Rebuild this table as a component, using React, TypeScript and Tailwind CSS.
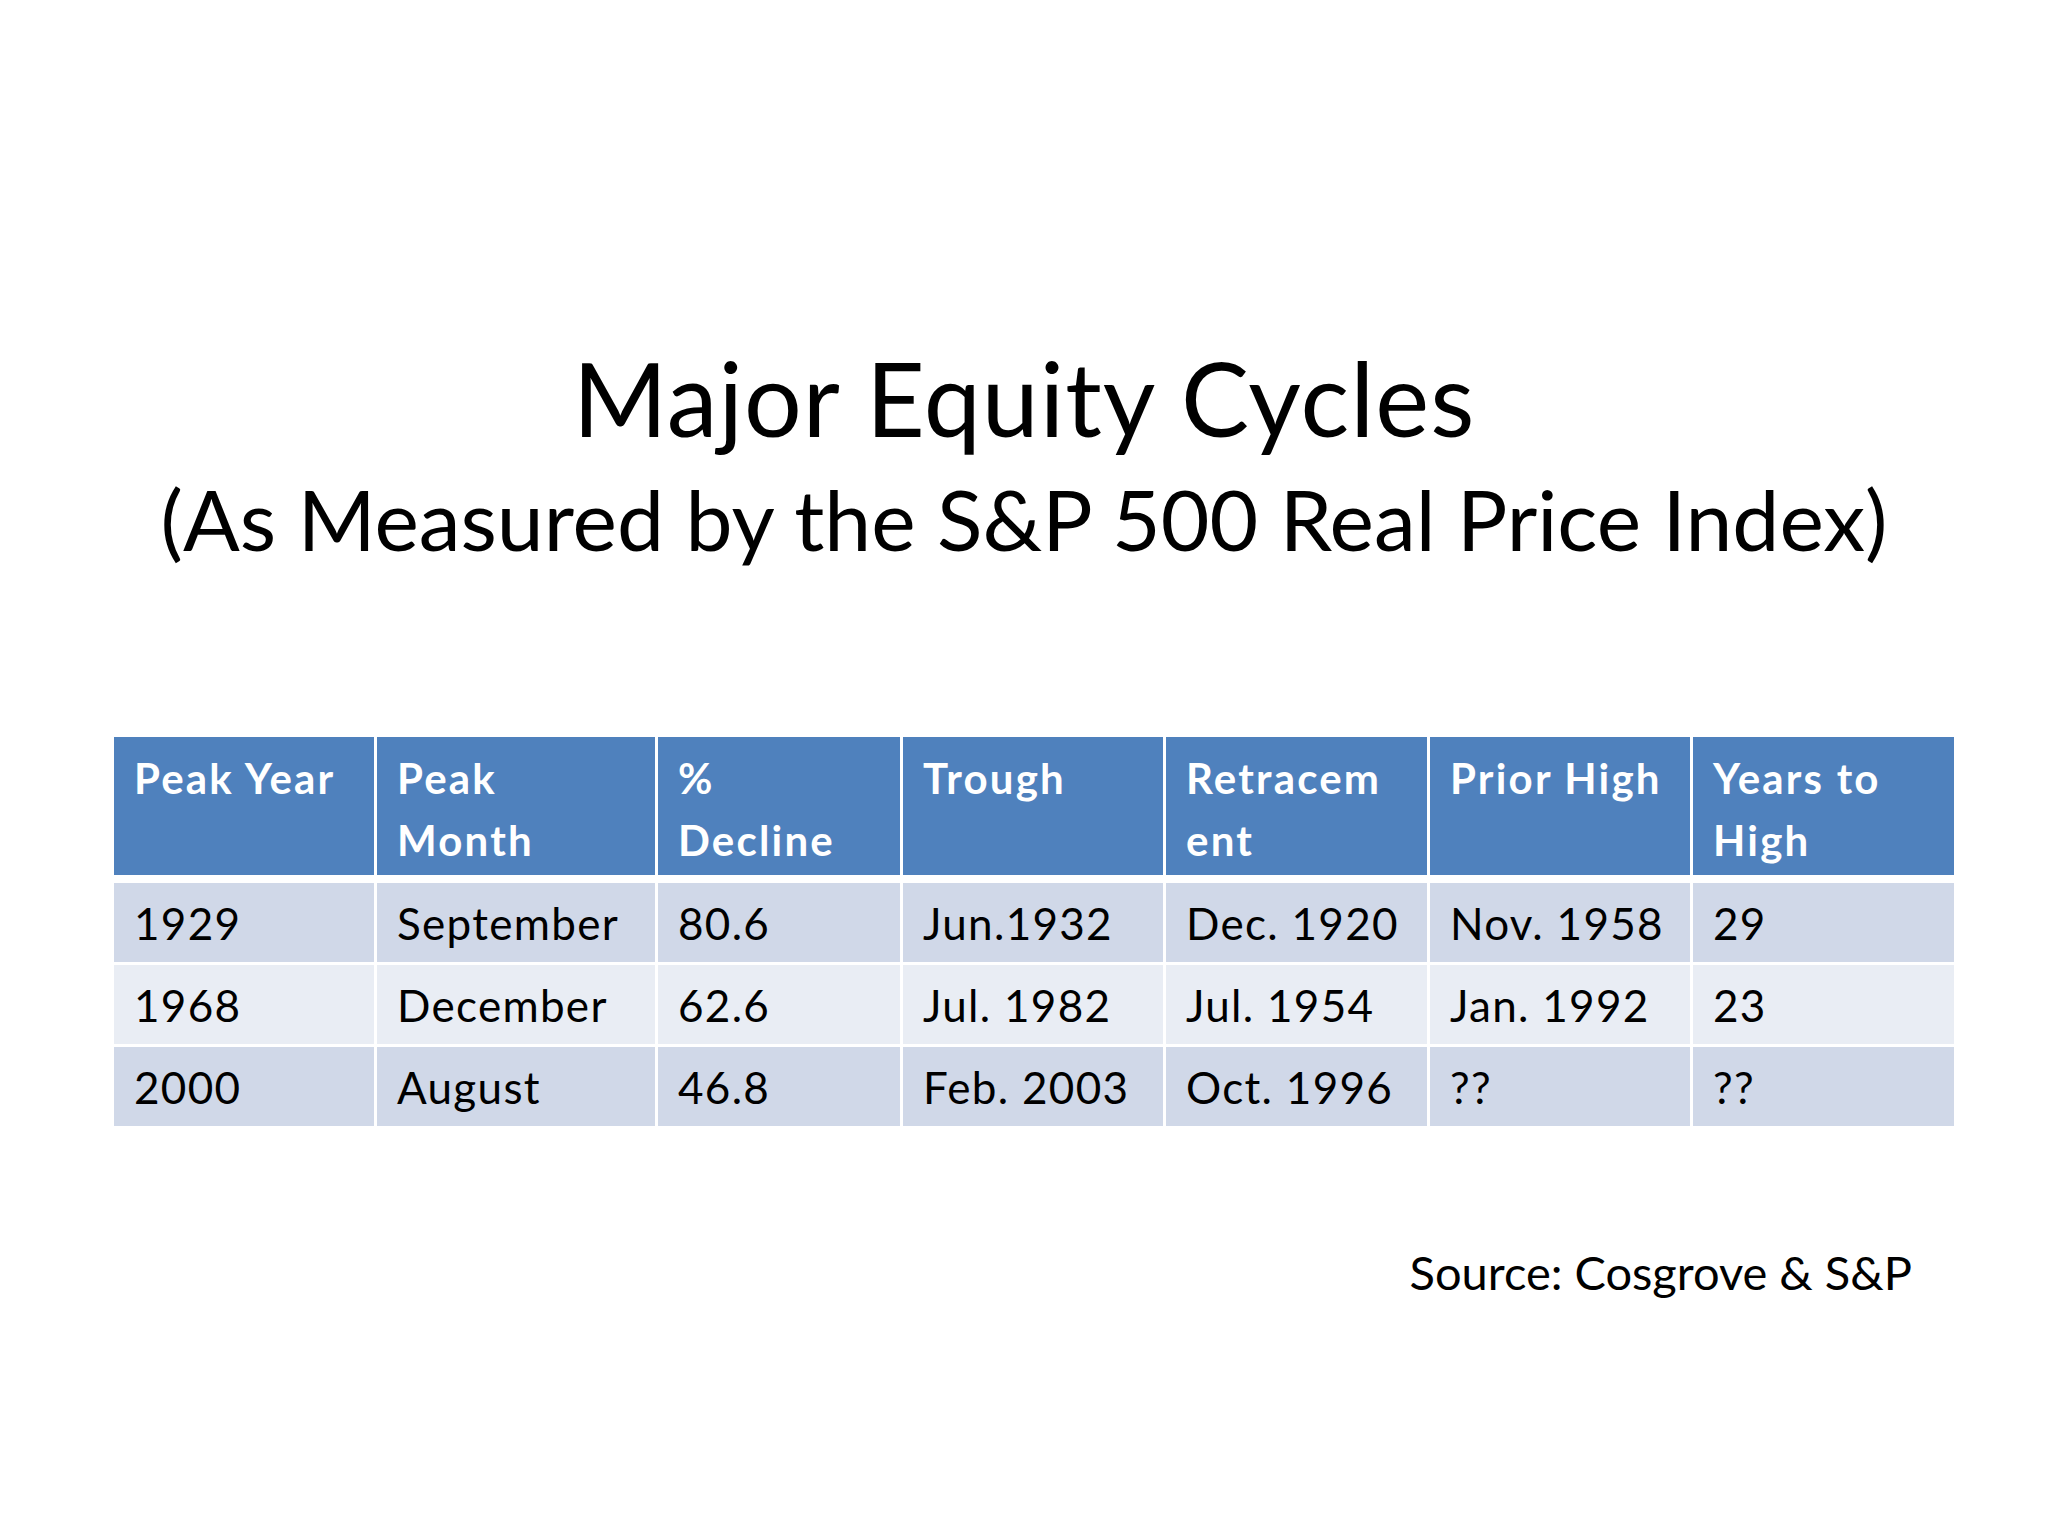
const HEADERS = ['Peak Year', 'Peak Month', '% Decline', 'Trough', 'Retracem ent', 'Prior High', 'Years to High'];

const HEADER_LINES: string[][] = [
  ['Peak Year'],
  ['Peak', 'Month'],
  ['%', 'Decline'],
  ['Trough'],
  ['Retracem', 'ent'],
  ['Prior High'],
  ['Years to', 'High'],
];

const ROWS = [
  ['1929', 'September', '80.6', 'Jun.1932', 'Dec. 1920', 'Nov. 1958', '29'],
  ['1968', 'December', '62.6', 'Jul. 1982', 'Jul. 1954', 'Jan. 1992', '23'],
  ['2000', 'August', '46.8', 'Feb. 2003', 'Oct. 1996', '??', '??'],
];

const COLS = 'grid grid-cols-[260px_278px_242px_260px_261px_260px_261px] gap-x-[3px]';

export default function App() {
  return (
    <div className="w-[2048px] h-[1536px] bg-white text-black font-['Lato','Liberation_Sans',sans-serif] flex flex-col pt-[337px]">
      <h1 className="text-center text-[102px] leading-[122px] tracking-[1px] font-normal">Major Equity Cycles</h1>
      <p className="mt-[11px] text-center text-[84px] leading-[98px]">
        (As Measured by the S&amp;P 500 Real Price Index)
      </p>

      <div className="mt-[169px] ml-[114px] w-[1840px] flex flex-col" aria-label={HEADERS.join(', ')}>
        <div className={COLS}>
          {HEADER_LINES.map((lines, i) => (
            <div key={i} className="h-[138px] bg-[#4f81bd] px-[20px] pt-[10px] text-white font-bold text-[42px] leading-[62px] tracking-[2.2px]">
              {lines.map((l, j) => (
                <div key={j}>{l}</div>
              ))}
            </div>
          ))}
        </div>

        <div className="mt-[8px] flex flex-col gap-y-[3px]">
          {ROWS.map((row, r) => (
            <div key={r} className={COLS}>
              {row.map((cell, c) => (
                <div
                  key={c}
                  className={`h-[79px] px-[20px] flex items-center text-[44px] leading-[52px] tracking-[1.3px] ${
                    r === 1 ? 'bg-[#e9edf4]' : 'bg-[#d0d8e8]'
                  }`}
                >
                  {cell}
                </div>
              ))}
            </div>
          ))}
        </div>
      </div>

      <p className="mt-[118px] self-end pr-[136px] text-[47px] leading-[56px]">Source: Cosgrove &amp; S&amp;P</p>
    </div>
  );
}
